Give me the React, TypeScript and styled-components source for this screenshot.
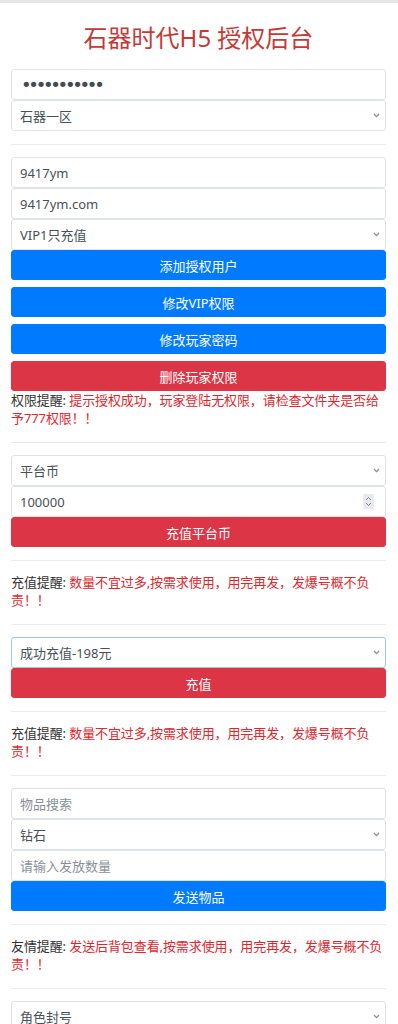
import React from 'react';
import styled, { createGlobalStyle } from 'styled-components';

const GlobalStyle = createGlobalStyle`
  body {
    margin: 0;
    background: #fff;
    font-family: "Noto Sans", "Noto Sans CJK SC", sans-serif;
    color: #212529;
  }
`;

const TopStrip = styled.div`
  height: 3px;
  background: #e5e5e5;
`;

const Page = styled.div`
  padding: 0 12px 30px 11px;
`;

const Title = styled.h2`
  margin: 19px 0 15px;
  font-size: 24px;
  line-height: 32px;
  font-weight: 400;
  text-align: center;
  color: #c43a38;
`;

const Field = styled.input`
  display: block;
  box-sizing: border-box;
  width: 100%;
  height: 31px;
  margin: 0;
  padding: 0 8px;
  font-family: inherit;
  font-size: 13px;
  color: #495057;
  background: #fff;
  border: 1px solid #dfe2e6;
  border-radius: 3px;
  outline: none;

  &::placeholder {
    color: #8a9096;
  }

  &[type='password'] {
    padding-left: 9px;
    font-family: "DejaVu Sans", sans-serif;
    font-size: 18px;
    letter-spacing: -3.3px;
    color: #454b51;
  }

  &::-webkit-inner-spin-button,
  &::-webkit-outer-spin-button {
    -webkit-appearance: none;
    margin: 0;
  }
`;

const Wrap = styled.div`
  position: relative;
`;

const Select = styled.select<{ $focus?: boolean }>`
  display: block;
  box-sizing: border-box;
  width: 100%;
  height: 31px;
  margin: 0;
  padding: 0 24px 0 8px;
  font-family: inherit;
  font-size: 13px;
  color: #495057;
  background: #fff;
  border: 1px solid ${(p) => (p.$focus ? '#a3c5eb' : '#dfe2e6')};
  border-radius: 3px;
  appearance: none;
  -webkit-appearance: none;
  outline: none;
`;

const Chevron = styled.svg`
  position: absolute;
  right: 6px;
  top: 13px;
  width: 7px;
  height: 5px;
  pointer-events: none;
`;

const Spinner = styled.svg`
  position: absolute;
  right: 12px;
  top: 8px;
  width: 11px;
  height: 15px;
  pointer-events: none;
`;

const Button = styled.button<{ $danger?: boolean }>`
  display: block;
  width: 100%;
  height: 30px;
  margin: 0;
  padding: 0;
  font-family: inherit;
  font-size: 13px;
  color: #fff;
  background: ${(p) => (p.$danger ? '#dc3545' : '#007bff')};
  border: 1px solid ${(p) => (p.$danger ? '#dc3545' : '#007bff')};
  border-radius: 3px;

  & + & {
    margin-top: 7px;
  }
`;

const Rule = styled.hr`
  margin: 13px 0 12px;
  border: 0;
  border-top: 1px solid #ebebeb;
`;

const Notice = styled.p`
  margin: 0;
  padding: 0 0 2px;
  font-size: 13px;
  font-weight: 400;
  line-height: 18px;
  letter-spacing: -0.1px;
  color: #333;
`;

const Alert = styled.span`
  color: #e0262d;
`;

const SelectBox: React.FC<{ value: string; focus?: boolean }> = ({ value, focus }) => (
  <Wrap>
    <Select $focus={focus} defaultValue={value}>
      <option>{value}</option>
    </Select>
    <Chevron viewBox="0 0 7 5">
      <path d="M1 1 3.5 3.6 6 1" fill="none" stroke="#868e96" strokeWidth="1.3" />
    </Chevron>
  </Wrap>
);

const NumberBox: React.FC<{ value: string }> = ({ value }) => (
  <Wrap>
    <Field type="number" defaultValue={value} />
    <Spinner viewBox="0 0 11 15">
      <rect x="0" y="0" width="11" height="15" rx="2" fill="#e8eaed" />
      <path d="M3 6 5.5 3.5 8 6M3 9 5.5 11.5 8 9" fill="none" stroke="#7d848b" strokeWidth="1" />
    </Spinner>
  </Wrap>
);

const tip = '数量不宜过多,按需求使用，用完再发，发爆号概不负责！！';

const App: React.FC = () => (
  <>
    <GlobalStyle />
    <TopStrip />
    <Page>
      <Title>石器时代H5 授权后台</Title>
      <Field type="password" defaultValue="12345678901" />
      <SelectBox value="石器一区" />
      <Rule />

      <Field defaultValue="9417ym" />
      <Field defaultValue="9417ym.com" />
      <SelectBox value="VIP1只充值" />
      <Button>添加授权用户</Button>
      <Button>修改VIP权限</Button>
      <Button>修改玩家密码</Button>
      <Button $danger>删除玩家权限</Button>
      <Notice>
        权限提醒: <Alert>提示授权成功，玩家登陆无权限，请检查文件夹是否给予777权限！！</Alert>
      </Notice>
      <Rule />

      <SelectBox value="平台币" />
      <NumberBox value="100000" />
      <Button $danger>充值平台币</Button>
      <Rule />
      <Notice>
        充值提醒: <Alert>{tip}</Alert>
      </Notice>
      <Rule />

      <SelectBox value="成功充值-198元" focus />
      <Button $danger>充值</Button>
      <Rule />
      <Notice>
        充值提醒: <Alert>{tip}</Alert>
      </Notice>
      <Rule />

      <Field placeholder="物品搜索" />
      <SelectBox value="钻石" />
      <Field placeholder="请输入发放数量" />
      <Button>发送物品</Button>
      <Rule />
      <Notice>
        友情提醒: <Alert>发送后背包查看,按需求使用，用完再发，发爆号概不负责！！</Alert>
      </Notice>
      <Rule />

      <SelectBox value="角色封号" />
      <Field placeholder="请输入角色名" />
      <Button $danger>执行</Button>
    </Page>
  </>
);

export default App;
